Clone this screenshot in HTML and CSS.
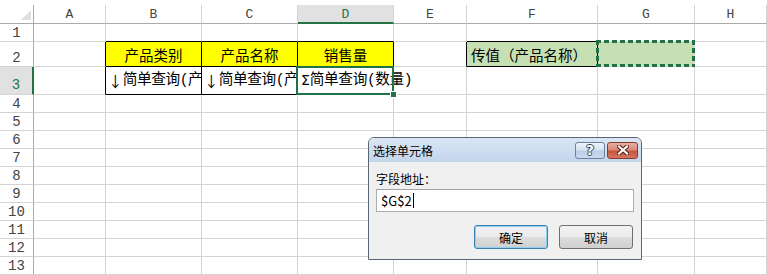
FILE: index.html
```html
<!DOCTYPE html>
<html lang="zh-CN">
<head>
<meta charset="utf-8">
<title>选择单元格</title>
<link rel="stylesheet" href="styles.css">
</head>
<body>
<div class="sheet">
  <div class="corner"><svg width="10" height="10" viewBox="0 0 10 10"><polygon points="10,0 10,10 0,10" fill="#dfdfdf"/></svg></div>
  <div class="ch">A</div><div class="ch">B</div><div class="ch">C</div><div class="ch ch-sel">D</div><div class="ch">E</div><div class="ch">F</div><div class="ch">G</div><div class="ch">H</div>

  <div class="rh">1</div>
  <div class="c"></div><div class="c kb"></div><div class="c kb"></div><div class="c kb"></div><div class="c"></div><div class="c kb"></div><div class="c"></div><div class="c"></div>

  <div class="rh">2</div>
  <div class="c kr"></div>
  <div class="c box yellow r2 center">产品类别</div>
  <div class="c box yellow r2 center">产品名称</div>
  <div class="c box yellow r2 center">销售量</div>
  <div class="c kr"></div>
  <div class="c box green r2 indent">传值（产品名称）</div>
  <div class="c green ants-host"><div class="ants"></div></div>
  <div class="c"></div>

  <div class="rh rh-sel">3</div>
  <div class="c kr"></div>
  <div class="c box r3 clip"><span class="fw">↓</span>简单查询(产</div>
  <div class="c box r3 clip"><span class="fw">↓</span>简单查询(产</div>
  <div class="c box r3 spill"><span class="fw sigma">Σ</span>简单查询(数量)<div class="selection"><div class="handle"></div></div></div>
  <div class="c"></div><div class="c"></div><div class="c"></div><div class="c"></div>

  <div class="rh">4</div><div class="c"></div><div class="c"></div><div class="c"></div><div class="c"></div><div class="c"></div><div class="c"></div><div class="c"></div><div class="c"></div>
  <div class="rh">5</div><div class="c"></div><div class="c"></div><div class="c"></div><div class="c"></div><div class="c"></div><div class="c"></div><div class="c"></div><div class="c"></div>
  <div class="rh">6</div><div class="c"></div><div class="c"></div><div class="c"></div><div class="c"></div><div class="c"></div><div class="c"></div><div class="c"></div><div class="c"></div>
  <div class="rh">7</div><div class="c"></div><div class="c"></div><div class="c"></div><div class="c"></div><div class="c"></div><div class="c"></div><div class="c"></div><div class="c"></div>
  <div class="rh">8</div><div class="c"></div><div class="c"></div><div class="c"></div><div class="c"></div><div class="c"></div><div class="c"></div><div class="c"></div><div class="c"></div>
  <div class="rh">9</div><div class="c"></div><div class="c"></div><div class="c"></div><div class="c"></div><div class="c"></div><div class="c"></div><div class="c"></div><div class="c"></div>
  <div class="rh">10</div><div class="c"></div><div class="c"></div><div class="c"></div><div class="c"></div><div class="c"></div><div class="c"></div><div class="c"></div><div class="c"></div>
  <div class="rh">11</div><div class="c"></div><div class="c"></div><div class="c"></div><div class="c"></div><div class="c"></div><div class="c"></div><div class="c"></div><div class="c"></div>
  <div class="rh">12</div><div class="c"></div><div class="c"></div><div class="c"></div><div class="c"></div><div class="c"></div><div class="c"></div><div class="c"></div><div class="c"></div>
  <div class="rh">13</div><div class="c"></div><div class="c"></div><div class="c"></div><div class="c"></div><div class="c"></div><div class="c"></div><div class="c"></div><div class="c"></div>
</div>

<div class="dialog">
  <div class="titlebar">
    <span class="title">选择单元格</span>
    <div class="tbtns">
      <span class="tb tb-help">?</span>
      <span class="tb tb-close">
        <svg width="12" height="10" viewBox="0 0 12 10">
          <path d="M2 1.5 L10 8.5 M10 1.5 L2 8.5" stroke="#5a1e14" stroke-width="4.2" stroke-linecap="square"/>
          <path d="M2 1.5 L10 8.5 M10 1.5 L2 8.5" stroke="#ffffff" stroke-width="2.2" stroke-linecap="square"/>
        </svg>
      </span>
    </div>
  </div>
  <div class="dbody">
    <div class="label">字段地址<span class="colon">：</span></div>
    <div class="input">$G$2<span class="caret"></span></div>
    <div class="actions">
      <button class="btn btn-primary">确定</button>
      <button class="btn">取消</button>
    </div>
  </div>
</div>
</body>
</html>
```
FILE: styles.css
```css
html, body {
  margin: 0;
  padding: 0;
}
body {
  position: relative;
  width: 767px;
  height: 275px;
  overflow: hidden;
  background: #ffffff;
  font-family: "Noto Sans CJK SC", "Noto Sans", sans-serif;
}

.sheet {
  display: grid;
  grid-template-columns: 34px 72px 96px 96px 96px 73px 131px 97px 72px;
  grid-template-rows: 19px 18px 25px 28px repeat(10, 18px);
  padding-top: 5px;
}
.sheet > div {
  box-sizing: border-box;
  min-width: 0;
}

.corner {
  border-right: 1px solid #ababab;
  border-bottom: 1px solid #ababab;
  display: flex;
  align-items: flex-end;
  justify-content: flex-end;
  padding: 0 2px 3px 0;
}
.corner svg { display: block; }

.ch {
  border-right: 1px solid #d4d4d4;
  border-bottom: 1px solid #ababab;
  display: flex;
  align-items: center;
  justify-content: center;
  font-family: "Liberation Mono", "DejaVu Sans Mono", monospace;
  font-size: 13px;
  color: #444444;
  padding-top: 1px;
}
.ch-sel {
  background: #e1e1e1;
  border-bottom: 2px solid #217346;
  color: #217346;
}

.rh {
  border-right: 1px solid #ababab;
  border-bottom: 1px solid #d4d4d4;
  display: flex;
  align-items: flex-end;
  justify-content: center;
  font-family: "Liberation Mono", "DejaVu Sans Mono", monospace;
  font-size: 14px;
  line-height: 16px;
  color: #444444;
  padding-bottom: 0;
}
.rh-sel {
  background: #e1e1e1;
  border-right: 2px solid #217346;
  color: #217346;
  padding-bottom: 1px;
}

.c {
  border-right: 1px solid #d4d4d4;
  border-bottom: 1px solid #d4d4d4;
  display: flex;
  align-items: flex-end;
  white-space: nowrap;
  font-size: 14.5px;
  line-height: 17px;
  color: #000000;
  padding: 0 2px;
}
.kr { border-right-color: #000000; }
.kb { border-bottom-color: #000000; }
.box {
  border-right-color: #000000;
  border-bottom-color: #000000;
}
.yellow { background: #ffff00; }
.green { background: #c6e0b4; }
.r2 { padding-bottom: 3px; }
.center { justify-content: center; }
.indent { padding-left: 4px; }
.r3 {
  align-items: center;
  padding-bottom: 1px;
  font-family: "Liberation Mono", "Noto Sans CJK SC", monospace;
  font-size: 14.67px;
  letter-spacing: -0.4px;
}
.fw {
  display: inline-block;
  width: 15px;
  text-align: center;
  font-family: "Noto Sans CJK SC", sans-serif;
  letter-spacing: 0;
}
.sigma {
  font-family: "DejaVu Sans", sans-serif;
  font-size: 14px;
  text-align: left;
  padding-left: 1px;
  box-sizing: border-box;
}
.clip { overflow: hidden; }
.spill {
  position: relative;
  overflow: visible;
}

.ants-host { position: relative; }
.ants {
  position: absolute;
  left: -2px;
  top: -2px;
  right: -1px;
  bottom: -1px;
  background:
    repeating-linear-gradient(90deg, #217346 0 5px, transparent 5px 8px) left top / 100% 3px no-repeat,
    repeating-linear-gradient(90deg, #217346 0 5px, transparent 5px 8px) left bottom / 100% 3px no-repeat,
    repeating-linear-gradient(180deg, #217346 0 5px, transparent 5px 8px) left top / 3px 100% no-repeat,
    repeating-linear-gradient(180deg, #217346 0 5px, transparent 5px 8px) right top / 3px 100% no-repeat;
}

.selection {
  position: absolute;
  left: -2px;
  top: -1px;
  right: -1px;
  bottom: -1px;
  border: 2px solid #217346;
}
.handle {
  position: absolute;
  right: -5px;
  bottom: -5px;
  width: 5px;
  height: 5px;
  background: #217346;
  border: 1px solid #ffffff;
}

/* dialog */
.dialog {
  position: absolute;
  left: 368px;
  top: 137px;
  width: 274px;
  height: 123px;
  box-sizing: border-box;
  border: 1px solid #5c6776;
  border-radius: 6px 6px 0 0;
  background: #f0f0f0;
  display: flex;
  flex-direction: column;
  font-size: 12px;
  color: #000000;
}
.titlebar {
  height: 24px;
  flex: none;
  display: flex;
  align-items: center;
  justify-content: space-between;
  padding: 0 3px 0 4px;
  border-radius: 5px 5px 0 0;
  background: linear-gradient(#dbe6f4, #c3d5ec);
}
.title {
  font-size: 12px;
  color: #000000;
}
.tbtns {
  display: flex;
  gap: 2px;
}
.tb {
  box-sizing: border-box;
  height: 17px;
  border-radius: 3px;
  display: flex;
  align-items: center;
  justify-content: center;
}
.tb-help {
  width: 30px;
  border: 1px solid #6f819a;
  background: linear-gradient(#eef3fa 0%, #d5e2f2 45%, #bccfe6 55%, #c9d9ee 100%);
  color: #ffffff;
  font-family: "DejaVu Sans", sans-serif;
  font-weight: bold;
  font-size: 14px;
  line-height: 14px;
  text-shadow: 1px 0 0 #34445a, -1px 0 0 #34445a, 0 1px 0 #34445a, 0 -1px 0 #34445a;
}
.tb-close {
  width: 31px;
  border: 1px solid #8a3a2d;
  background: linear-gradient(#eab0a2 0%, #d98a76 45%, #c9563e 55%, #d27561 100%);
}
.tb-close svg { display: block; }

.dbody {
  flex: 1;
  padding: 0 7px 10px;
  display: flex;
  flex-direction: column;
}
.label {
  margin-top: 9px;
  line-height: 16px;
}
.colon {
  display: inline-block;
  width: 12px;
  text-align: right;
}
.input {
  margin-top: 2px;
  height: 23px;
  box-sizing: border-box;
  border: 1px solid #abadb3;
  border-top-color: #a0a4ac;
  background: #ffffff;
  display: flex;
  align-items: center;
  padding-left: 4px;
  font-size: 13px;
}
.caret {
  display: inline-block;
  width: 1px;
  height: 15px;
  background: #000000;
  margin-left: 1px;
}
.actions {
  margin-top: 13px;
  display: flex;
  justify-content: flex-end;
  gap: 11px;
  padding-right: 1px;
}
.btn {
  width: 74px;
  height: 24px;
  box-sizing: border-box;
  border: 1px solid #707070;
  border-radius: 3px;
  background: linear-gradient(#f2f2f2 0%, #ebebeb 48%, #dddddd 52%, #cfcfcf 100%);
  font-family: "Noto Sans CJK SC", sans-serif;
  font-size: 12px;
  color: #000000;
  padding: 0;
}
.btn-primary {
  border-color: #3c7fb1;
  box-shadow: inset 0 0 0 1px #8fd0f2;
}
```
